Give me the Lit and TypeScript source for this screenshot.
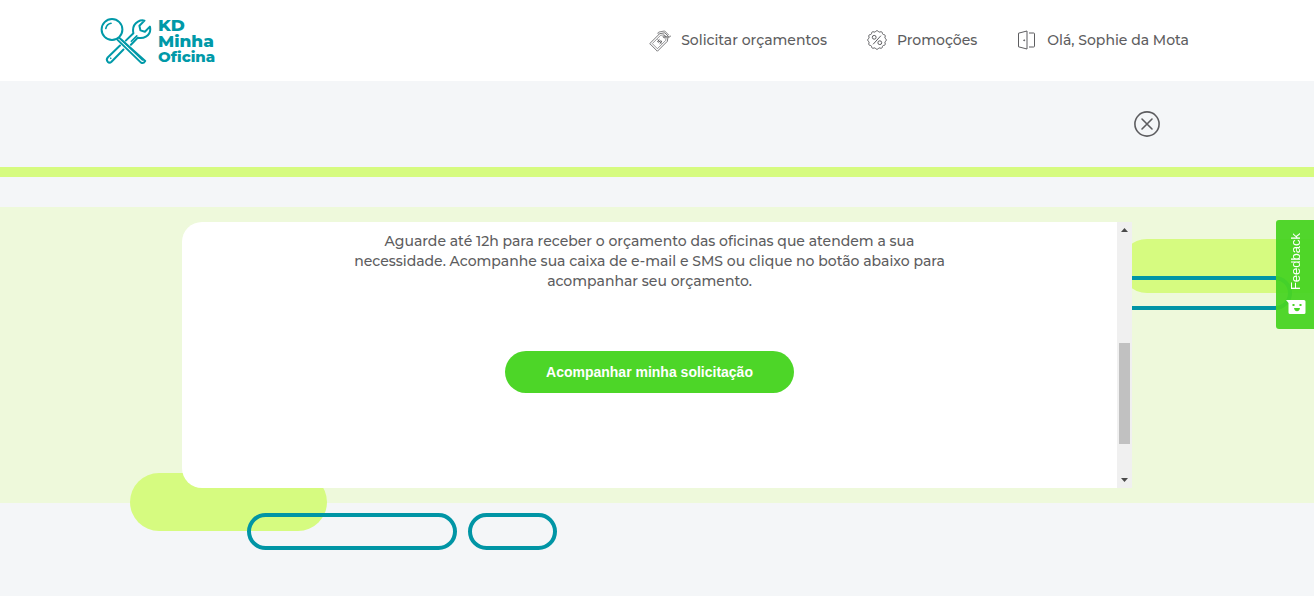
import { LitElement, html, css, svg } from "lit";
import { customElement, property } from "lit/decorators.js";

const sealPath = (() => {
  const points: string[] = [];
  for (let i = 0; i < 72; i++) {
    const a = (i / 72) * Math.PI * 2;
    const r = 8.8 + 0.6 * Math.cos(a * 12);
    points.push(`${(10 + r * Math.cos(a)).toFixed(2)} ${(10 + r * Math.sin(a)).toFixed(2)}`);
  }
  return `M${points.join("L")}Z`;
})();

const icons = {
  tags: svg`<g transform="rotate(-45 10 10)" stroke-width=".8">
      <path d="M-.5 4.6H13.500l4.300 3v4.800l-4.300 3H-.5Z"/>
      <path d="M1.300 6.400H13l3 2.200v2.800l-3 2.200H1.300Z" stroke-width=".6"/>
      <circle cx="14.600" cy="10" r="1.100"/>
      <path d="M14.600 10 18 13.800q1 .8 1.700-.2"/>
      <path d="M12.500 4.600V2.800h1.500l5 3.400v6" stroke-width=".7"/>
      <path d="M9.400 8.500Q6.200 8 6.400 9.200q.1.900 1.600.9t1.600 1Q9.600 12.300 6.300 11.700M8 7.300v5.500" stroke-width=".9"/>
    </g>`,
  seal: svg`<path d=${sealPath}/><circle cx="7.2" cy="7.3" r="1.9"/><circle cx="12.8" cy="12.7" r="1.9"/><path d="M13.9 5.7 6.1 14.3"/>`,
  door: svg`<path d="M1.5 3.2 10 1v18L1.5 16.8ZM12 3h4.7q.8 0 .8.8v12.4q0 .8-.8.8H12"/><circle cx="7.2" cy="10.3" r=".5" fill="currentColor"/>`,
};

@customElement("nav-item")
class NavItem extends LitElement {
  @property() icon: keyof typeof icons = "tags";
  @property() label = "";

  static styles = css`
    .link {
      display: flex;
      align-items: center;
      gap: 10px;
      color: #5d5d60;
      text-decoration: none;
      white-space: nowrap;
    }
    .icon {
      width: 20px;
      height: 20px;
      fill: none;
      stroke: currentColor;
      stroke-width: 1;
      overflow: visible;
    }
  `;

  render() {
    return html`<a class="link" href="#">
      <svg class="icon" viewBox="0 0 20 20" aria-hidden="true">${icons[this.icon]}</svg>
      <span>${this.label}</span>
    </a>`;
  }
}

@customElement("app-root")
class AppRoot extends LitElement {
  static styles = css`
    :host {
      display: block;
      min-height: 100vh;
      background: #f4f6f8;
      color: #5d5d60;
      font: 500 14px/20px Montserrat, Inter, sans-serif;
      overflow-x: clip;
    }
    .header {
      display: flex;
      align-items: center;
      justify-content: space-between;
      box-sizing: border-box;
      height: 81px;
      padding: 0 125px 0 100px;
      background: #fff;
    }
    .logo {
      display: flex;
      align-items: center;
      gap: 6px;
      color: #0099a8;
      text-decoration: none;
      font-weight: 800;
      font-size: 17px;
      line-height: 16px;
    }
    .mark {
      width: 52px;
      height: 48px;
      fill: none;
      stroke: currentColor;
      stroke-width: 2;
      stroke-linecap: round;
      stroke-linejoin: round;
    }
    .wordmark {
      display: flex;
      flex-direction: column;
      padding-top: 1px;
    }
    .small { font-size: 15px; }
    .nav {
      display: flex;
      gap: 40px;
      padding-bottom: 1px;
    }
    .toolbar {
      display: flex;
      justify-content: flex-end;
      padding: 30px 154px;
    }
    .close {
      display: block;
      width: 26px;
      height: 26px;
      padding: 0;
      border: 0;
      background: none;
      color: #5d5d60;
    }
    .close svg {
      display: block;
      fill: none;
      stroke: currentColor;
      stroke-width: 1.6;
      stroke-linecap: round;
    }
    .rule {
      height: 10px;
      margin-bottom: 30px;
      background: #d6fb80;
    }
    .band {
      position: relative;
      padding: 15px 0;
      background: #eef9db;
    }
    .pill {
      position: absolute;
      box-sizing: border-box;
      border-radius: 30px;
    }
    .lime { background: #d6fb80; }
    .teal { border: 4px solid #0095a5; }
    .lime-right { left: calc(50% + 463px); right: -30px; top: 32px; height: 54px; }
    .teal-right { left: calc(50% + 400px); right: 22px; top: 69px; height: 34px; }
    .lime-left { left: calc(50% - 527px); top: 266px; width: 197px; height: 58px; }
    .teal-long { left: calc(50% - 410px); top: 306px; width: 210px; height: 37px; }
    .teal-short { left: calc(50% - 189px); top: 306px; width: 89px; height: 37px; }
    .card {
      position: relative;
      display: flex;
      max-width: 950px;
      margin: 0 auto;
      border-radius: 20px 0 0 20px;
      background: #fff;
      overflow: hidden;
    }
    .content {
      flex: 1;
      display: flex;
      flex-direction: column;
      align-items: center;
      gap: 60px;
      padding: 9px 20px 95px;
      text-align: center;
    }
    .message { margin: 0; }
    .primary {
      height: 42px;
      padding: 0 41px;
      border: 0;
      border-radius: 21px;
      background: #4dd628;
      color: #fff;
      font: bold 14px "Liberation Sans", Arial, sans-serif;
    }
    .scrollbar {
      display: grid;
      grid-template-rows: 15px 106fr 101fr 29fr 15px;
      width: 15px;
      background: #f0f0f0;
    }
    .arrow {
      width: 15px;
      height: 15px;
      fill: #4a4a4a;
    }
    .thumb {
      grid-row: 3;
      margin: 0 2px;
      background: #c1c1c1;
    }
    .down { grid-row: 5; }
    .feedback {
      position: fixed;
      top: 220px;
      right: 0;
      display: flex;
      flex-direction: column;
      align-items: center;
      justify-content: space-between;
      width: 38px;
      height: 109px;
      padding: 13px 0 14px 2px;
      border: 0;
      border-radius: 3px 0 0 3px;
      background: rgba(72, 212, 35, 0.95);
      color: #fff;
      font: 13px/16px "Liberation Sans", Arial, sans-serif;
    }
    .feedback-text {
      writing-mode: vertical-rl;
      transform: rotate(180deg);
    }
    .smile {
      width: 20px;
      height: 16px;
    }
  `;

  render() {
    return html`
      <header class="header">
        <a class="logo" href="#">
          <svg class="mark" viewBox="0 0 52 48" aria-hidden="true">
            <circle cx="12" cy="12.5" r="10.4" />
            <path d="M5.8 11.5q1.1-4.5 5.2-5.2" stroke-width="1.6" />
            <path d="m19.2 20.8 26 23.1q-1.7 3-4.2 1.7L17.3 22.6" />
            <path d="m21.6 23 20.8 20" stroke-width="1.6" />
            <path d="m23.5 32.5-12 12.2q-2 1.8-3.8 0-1.8-2 0-4.2L20 28.5" />
            <path d="m10.7 41.2.1.1" stroke-width="1.6" />
            <path d="m25.8 23.6 7.6-7.3q-1.7-8 4.6-11.7 3.2-1.8 6.5-1l-5.1 5.2 1 4.6 4.5 1.3 5-5.1q1.6 6.6-4 10-3.8 2.3-8.2 1.1l-6.8 7" />
            <path d="m31.3 24.3 5.5-5.4" stroke-width="1.6" />
          </svg>
          <span class="wordmark"><span>KD</span><span>Minha</span><span class="small">Oficina</span></span>
        </a>
        <nav class="nav">
          <nav-item icon="tags" label="Solicitar orçamentos"></nav-item>
          <nav-item icon="seal" label="Promoções"></nav-item>
          <nav-item icon="door" label="Olá, Sophie da Mota"></nav-item>
        </nav>
      </header>
      <main>
        <div class="toolbar">
          <button class="close" aria-label="Fechar">
            <svg width="26" height="26" viewBox="0 0 26 26">
              <circle cx="13" cy="13" r="12.1" />
              <path d="m8 8 10 10M18 8 8 18" />
            </svg>
          </button>
        </div>
        <div class="rule"></div>
        <section class="band">
          <div class="pill lime lime-right"></div>
          <div class="pill teal teal-right"></div>
          <div class="pill lime lime-left"></div>
          <div class="pill teal teal-long"></div>
          <div class="pill teal teal-short"></div>
          <div class="card">
            <div class="content">
              <p class="message">
                Aguarde até 12h para receber o orçamento das oficinas que atendem a sua<br />
                necessidade. Acompanhe sua caixa de e-mail e SMS ou clique no botão abaixo para<br />
                acompanhar seu orçamento.
              </p>
              <button class="primary">Acompanhar minha solicitação</button>
            </div>
            <div class="scrollbar" aria-hidden="true">
              <svg class="arrow" viewBox="0 0 15 15"><path d="M4 10 7.5 6 11 10Z" /></svg>
              <div class="thumb"></div>
              <svg class="arrow down" viewBox="0 0 15 15"><path d="M4 5 7.5 9 11 5Z" /></svg>
            </div>
          </div>
        </section>
      </main>
      <button class="feedback">
        <span class="feedback-text">Feedback</span>
        <svg class="smile" viewBox="0 0 20 16" aria-hidden="true">
          <path d="M0 1h18q1.5 0 1.5 1.5v11q0 1.5-1.5 1.5H4q-1.5 0-1.5-1.5V4Z" fill="#fff" />
          <path d="M6.5 5h2v2h-2zM13.5 5h2v2h-2zM8 9h6q-.6 3.2-3 3.2T8 9Z" fill="#48d423" />
        </svg>
      </button>
    `;
  }
}
